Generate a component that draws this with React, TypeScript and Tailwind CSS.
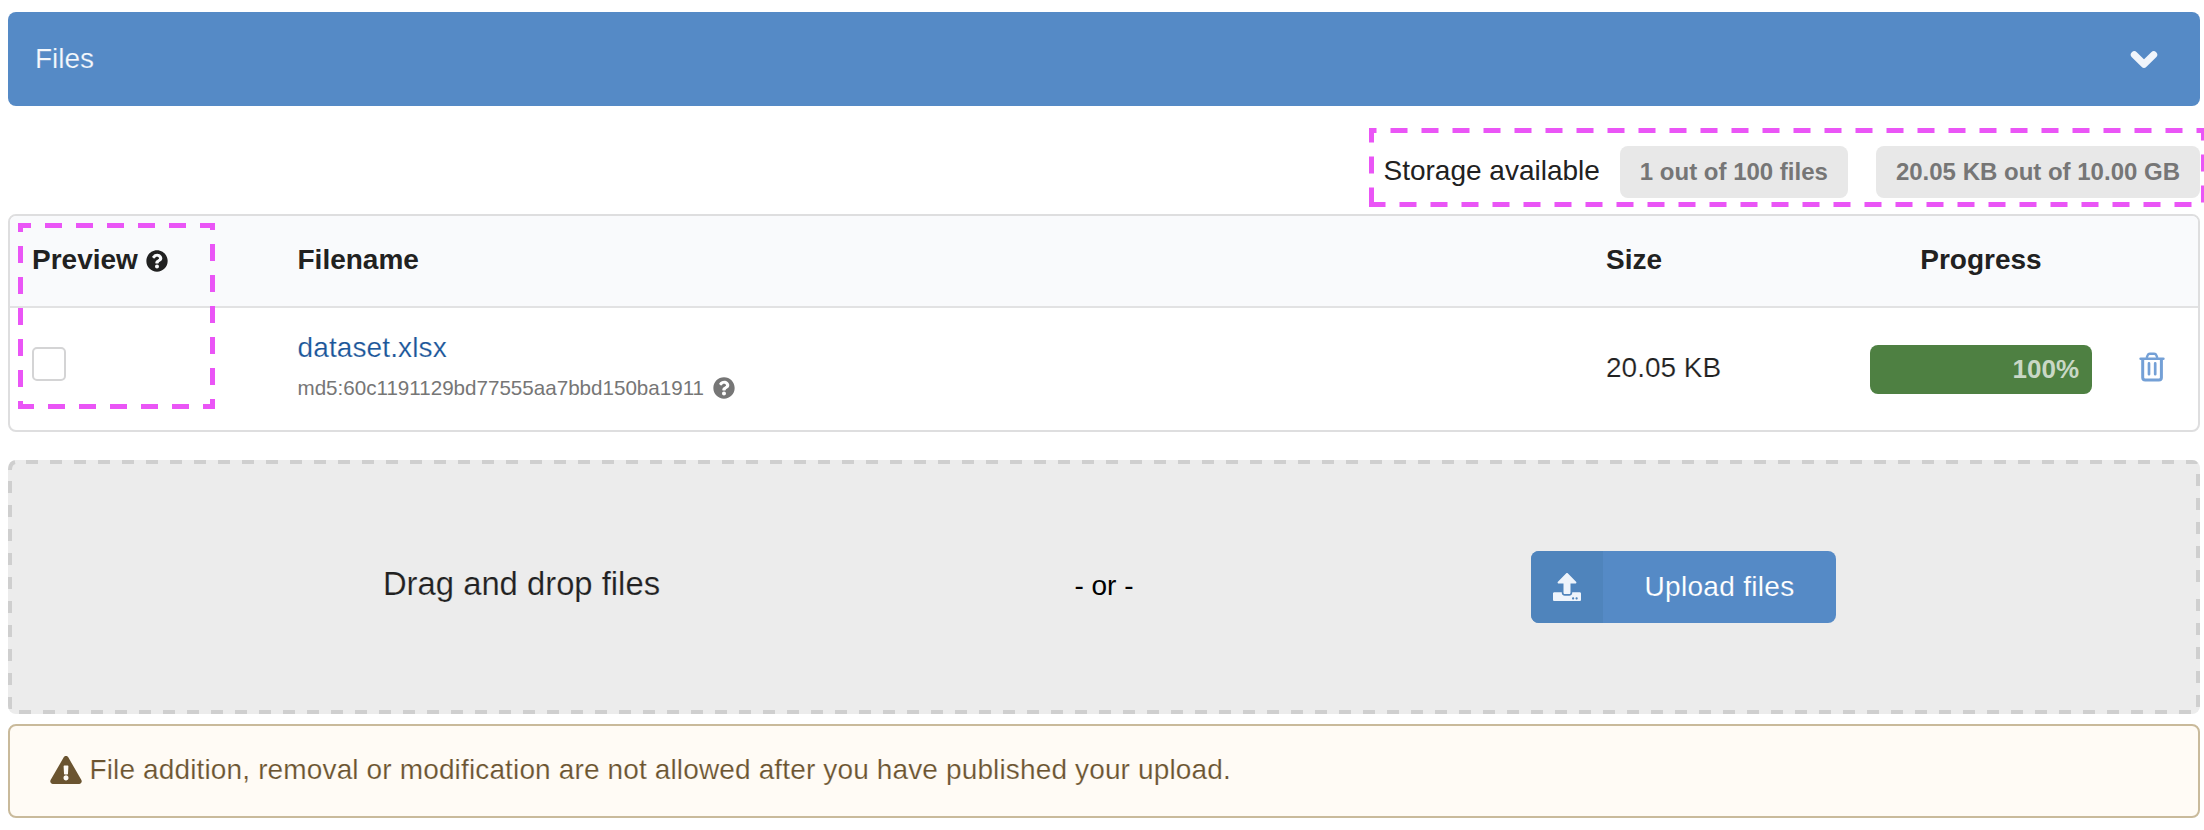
import React from "react";
import { FaQuestionCircle, FaUpload, FaExclamationTriangle } from "react-icons/fa";

function ChevronDown() {
  return (
    <svg width="28" height="20" viewBox="0 0 28 20" fill="none" className="block">
      <path d="M4.3 5.7 L14 15.3 L23.7 5.7" stroke="#f0f5fb" strokeWidth="7" strokeLinecap="round" strokeLinejoin="round" />
    </svg>
  );
}

function Trash() {
  return (
    <svg width="26" height="30" viewBox="0 0 26 30" fill="none" stroke="#74a0d6" className="block">
      <path d="M1.6 6.8 H24.4" strokeWidth="2.5" strokeLinecap="round" />
      <path d="M7.6 6 L8.6 3.4 Q9.2 1.8 10.8 1.8 H15.2 Q16.8 1.8 17.4 3.4 L18.4 6" strokeWidth="2.4" />
      <path d="M3.7 7 V25.4 Q3.7 27.9 6.2 27.9 H19.9 Q22.4 27.9 22.4 25.4 V7" strokeWidth="3" />
      <path d="M10 11.4 V22.2 M16.2 11.4 V22.2" strokeWidth="2.7" strokeLinecap="round" />
    </svg>
  );
}

function DropzoneBorder() {
  return (
    <svg className="pointer-events-none absolute inset-0" width="2192" height="254" fill="none" stroke="#cfcfcf" strokeWidth="4">
      <path d="M18 2 H2189.5" strokeDasharray="12 12" />
      <path d="M2 10 Q2 3 7 2" />
      <path d="M2190 14 V124" strokeDasharray="12 12" />
      <path d="M2190 139 V248" strokeDasharray="12 12" />
      <path d="M11 252 H2184" strokeDasharray="12 12" />
      <path d="M2 21 V249" strokeDasharray="12 12" />
    </svg>
  );
}

export default function App() {
  return (
    <div className="relative h-[830px] w-[2204px] overflow-hidden bg-white px-2 pt-3 pr-1 font-['Liberation_Sans',Arial,sans-serif] text-[28px] leading-8 text-[#212121]">
      <header className="flex h-[94px] w-[2192px] items-center justify-between rounded-lg bg-[#558ac6] pr-[42px] pl-[27px]">
        <h2 className="-mt-px text-[#f4f8fc] [-webkit-text-stroke:0.2px_#558ac6]">Files</h2>
        <ChevronDown />
      </header>

      <div className="mt-10 flex h-[52px] w-[2192px] items-center justify-end">
        <span className="-mt-[3px] mr-5">Storage available</span>
        <span className="mr-7 flex h-[52px] items-center rounded-lg bg-[#e8e8e8] px-5 pb-px text-2xl font-bold whitespace-nowrap text-[#767676]">1 out of 100 files</span>
        <span className="flex h-[52px] items-center rounded-lg bg-[#e8e8e8] px-5 pb-px text-2xl font-bold whitespace-nowrap text-[#767676]">20.05 KB out of 10.00 GB</span>
      </div>

      <section className="mt-4 h-[218px] w-[2192px] overflow-hidden rounded-lg border-2 border-[#dededf]">
        <div className="grid h-[92px] grid-cols-[266px_1309px_264px_264px_1fr] items-center border-b-2 border-[#e2e2e3] bg-[#f9fafc] pb-[2px] font-bold">
          <div className="flex items-center gap-2 pl-[22px]">
            Preview <FaQuestionCircle className="mt-px size-[22px]" />
          </div>
          <div className="pl-[21.5px]">Filename</div>
          <div className="pl-[21px]">Size</div>
          <div className="text-center">Progress</div>
          <div />
        </div>
        <div className="grid h-[122px] grid-cols-[266px_1309px_264px_264px_1fr] items-center">
          <div className="pl-[22px]">
            <div className="-mt-[10px] size-[34px] rounded-[5px] border-2 border-[#d4d4d5] bg-white" />
          </div>
          <div className="flex h-full flex-col pt-6 pl-[21.5px]">
            <a className="tracking-[0.12px] text-[#1b5699] [-webkit-text-stroke:0.2px_#fff]">dataset.xlsx</a>
            <div className="mt-[8px] flex h-8 items-center gap-[9px] text-[20.6px] text-[#767676]">
              <span>md5:60c1191129bd77555aa7bbd150ba1911</span>
              <FaQuestionCircle className="-mt-px size-[22px]" />
            </div>
          </div>
          <div className="-mt-[2px] pl-[21px] [-webkit-text-stroke:0.2px_#fff]">20.05 KB</div>
          <div className="flex justify-center">
            <div className="flex h-[49px] w-[222px] items-center justify-end rounded-lg bg-[#4e8042] pr-[13px] pb-px text-[26px] font-bold text-[#c9d8c6]">100%</div>
          </div>
          <div className="-mt-[4px] pl-[26px]">
            <Trash />
          </div>
        </div>
      </section>

      <section className="relative mt-7 grid h-[254px] w-[2192px] grid-cols-[583px_582px_577px] items-center overflow-hidden rounded-lg bg-[#ececec] pl-[222px]">
        <DropzoneBorder />
        <div className="-mt-[7px] text-center text-[32.8px] [-webkit-text-stroke:0.2px_#ececec]">Drag and drop files</div>
        <div className="-mt-[2px] text-center text-black">- or -</div>
        <div className="flex justify-center">
          <button className="flex h-[72px] w-[305px] items-center overflow-hidden rounded-lg bg-[#558ac6]">
            <span className="flex h-full w-[72px] items-center justify-center bg-[#4f84bc]">
              <FaUpload className="size-7 text-[#eef4fb]" />
            </span>
            <span className="flex-1 text-center tracking-[0.3px] text-white [-webkit-text-stroke:0.15px_#558ac6]">Upload files</span>
          </button>
        </div>
      </section>

      <section className="mt-[10px] flex h-[94px] w-[2192px] items-center rounded-lg border-2 border-[#c9ba9b] bg-[#fffbf5] pl-[40px] text-[#6b5430]">
        <FaExclamationTriangle className="-mt-[3px] h-7 w-8" />
        <span className="-mt-[2px] ml-[7.5px] tracking-[0.14px] [-webkit-text-stroke:0.2px_#fffbf5]">
          File addition, removal or modification are not allowed after you have published your upload.
        </span>
      </section>

      <svg className="pointer-events-none absolute top-0 left-0" width="2204" height="830" fill="none" stroke="#ea55f6" strokeWidth="5" strokeDasharray="17 14">
        <path d="M20.5 406.5 V225.5 H212.5 V406.5 Z" strokeDashoffset="11.5" />
        <path d="M1371.5 204.5 V130.5 H2203.5 V204.5 Z" />
      </svg>
    </div>
  );
}
